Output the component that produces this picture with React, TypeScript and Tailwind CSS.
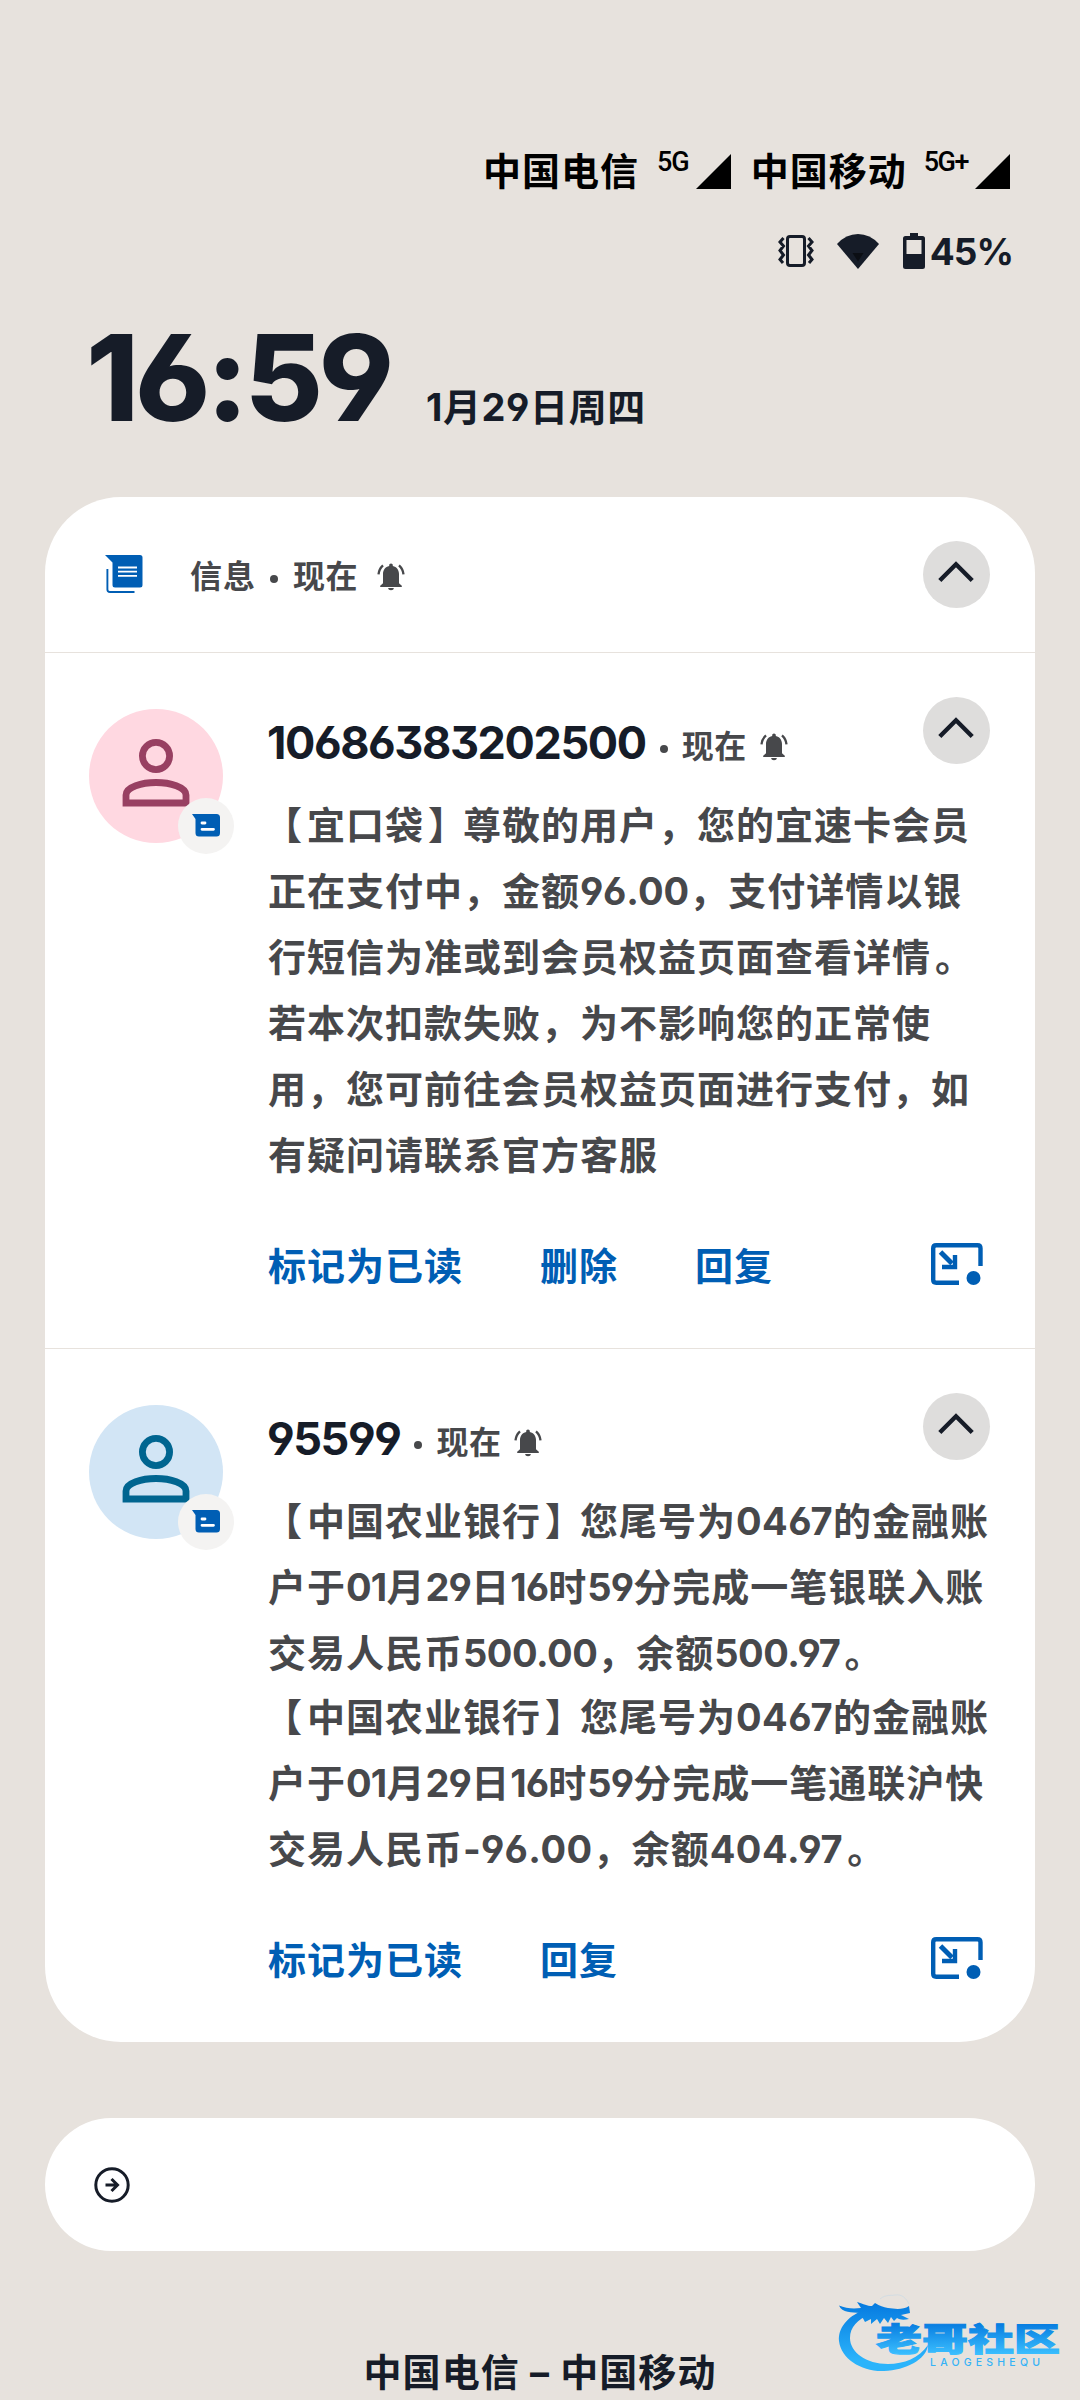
import { ReactNode } from "react";

const Bell = ({ className = "" }: { className?: string }) => (
  <svg viewBox="0 0 28 28" className={`h-[28px] w-[28px] shrink-0 ${className}`} fill="#47484b">
    <path d="M14 .6c1.100 0 1.800.8 1.800 1.700v.7c3.900.9 6.200 4 6.200 8v9.200l2.800 2.600v1.200H3.200v-1.200L6 20.200V11c0-4 2.300-7.100 6.200-8v-.7C12.200 1.400 12.900.6 14 .6z" />
    <path d="M11.200 25h5.600c0 1.300-1.200 2.300-2.800 2.300s-2.800-1-2.800-2.300z" />
    <path d="M6 2.300Q2 6 1.500 11.300M22 2.300Q26 6 26.500 11.300" fill="none" stroke="#47484b" strokeWidth="2.300" />
  </svg>
);

const Signal = () => (
  <svg viewBox="0 0 35 35" className="h-[35px] w-[35px]">
    <path d="M35 0v35H0z" />
  </svg>
);

const Collapse = () => (
  <button className="flex h-[67px] w-[67px] shrink-0 items-center justify-center rounded-full bg-[#dedddc]">
    <svg viewBox="0 0 36 22" className="mb-[5px] mr-px h-[22px] w-[36px]" fill="none" stroke="#161c28" strokeWidth="4.400">
      <path d="M1.800 19.500 18 3.300l16.200 16.200" />
    </svg>
  </button>
);

const Dot = ({ className = "" }: { className?: string }) => (
  <span className={`h-[8px] w-[8px] shrink-0 rounded-full bg-[#47484b] ${className}`} />
);

const Popup = () => (
  <svg viewBox="0 0 52 42" className="h-[42px] w-[52px]" fill="none" stroke="#005eb4" strokeWidth="4.400">
    <path d="M28 39.700H5.200Q2.200 39.700 2.200 36.700V5.200Q2.200 2.200 5.200 2.200H46.500Q49.500 2.200 49.500 5.200V23" />
    <path d="M9.500 9 21 20.500" strokeWidth="5" />
    <path d="M24 12v12H11" />
    <circle cx="42.500" cy="35" r="7" fill="#005eb4" stroke="none" />
  </svg>
);

const Avatar = ({ bg, color }: { bg: string; color: string }) => (
  <div className={`relative h-[134px] w-[134px] shrink-0 rounded-full ${bg}`}>
    <svg viewBox="0 0 134 134" className={`h-full w-full ${color}`} fill="none" stroke="currentColor" strokeWidth="6.800">
      <circle cx="67" cy="47" r="13.600" />
      <path d="M37 94V86C37 78 53 73.500 67 73.500S97 78 97 86V94Z" />
    </svg>
    <div className="absolute left-[89px] top-[89px] flex h-[56px] w-[56px] items-center justify-center rounded-full bg-[#f4f3f2]">
      <svg viewBox="0 0 28 23" className="mb-[1px] h-[23px] w-[28px]">
        <path d="M0 0H24.500Q28 0 28 3.500V19Q28 22.500 24.500 22.500H7Q3.500 22.500 3.500 19V5Z" fill="#005eb4" />
        <path d="M10 9h3M10 15.300H21.500" stroke="#fff" strokeWidth="2.800" strokeLinecap="round" />
      </svg>
    </div>
  </div>
);

// numbers get their own tracking, closing punctuation sits a little further right
const Mixed = ({ text, num }: { text: string; num: string }) => (
  <>
    {text.split(/([-\d.]+|[。】【])/).map((part, i) => {
      if (part === "。" || part === "】") {
        return (
          <span key={i} className="relative left-[4px]">
            {part}
          </span>
        );
      }
      if (part === "【") {
        return (
          <span key={i} className="relative left-[-4px]">
            {part}
          </span>
        );
      }
      return /\d/.test(part) ? (
        <span key={i} className={num}>
          {part}
        </span>
      ) : (
        part
      );
    })}
  </>
);

type Line = { text: string; num?: string; gap?: boolean };

type MessageProps = {
  sender: ReactNode;
  avatar: ReactNode;
  lines: Line[];
  actions: string[];
};

const Message = ({ sender, avatar, lines, actions }: MessageProps) => (
  <section className="flex h-[696px] border-t border-[#e7e2dd] pl-[44px] pr-[45px] pt-[44px]">
    <div className="pt-[12px]">{avatar}</div>
    <div className="ml-[45px] min-w-0 flex-1">
      <div className="flex h-[95px] justify-between">
        <div className="flex h-[90px] items-center">
          <span className="ml-[-1px] text-[45px] leading-none tracking-[-1.4px]">{sender}</span>
          <Dot className="ml-[14px] mt-[14px]" />
          <span className="ml-[14px] mt-[9px] text-[32px] leading-none tracking-[0.5px] text-[#47484b]">现在</span>
          <Bell className="ml-[13px] mt-[9px]" />
        </div>
        <Collapse />
      </div>
      <div className="whitespace-nowrap text-[38px] leading-[66px] tracking-[1px] text-[#47484b]">
        {lines.map((line, i) => (
          <p key={i} className={line.gap ? "mt-[-2px]" : ""}>
            <Mixed text={line.text} num={line.num ?? ""} />
          </p>
        ))}
      </div>
      <div className="mt-[45px] flex h-[66px] items-center text-[38px] tracking-[1px] text-[#005eb4]">
        {actions.map((action) => (
          <button key={action} className="mr-[77px] leading-none">
            {action}
          </button>
        ))}
        <div className="mb-[5px] ml-auto mr-[7px]">
          <Popup />
        </div>
      </div>
    </div>
  </section>
);

const pocketLines: Line[] = [
  { text: "【宜口袋】尊敬的用户，您的宜速卡会员" },
  { text: "正在支付中，金额96.00，支付详情以银", num: "tracking-[0px]" },
  { text: "行短信为准或到会员权益页面查看详情。" },
  { text: "若本次扣款失败，为不影响您的正常使" },
  { text: "用，您可前往会员权益页面进行支付，如" },
  { text: "有疑问请联系官方客服" },
];

const bankLines: Line[] = [
  { text: "【中国农业银行】您尾号为0467的金融账", num: "tracking-[0.4px]" },
  { text: "户于01月29日16时59分完成一笔银联入账", num: "tracking-[-0.8px]" },
  { text: "交易人民币500.00，余额500.97。", num: "tracking-[-0.5px]" },
  { text: "【中国农业银行】您尾号为0467的金融账", num: "tracking-[0.4px]", gap: true },
  { text: "户于01月29日16时59分完成一笔通联沪快", num: "tracking-[-0.8px]" },
  { text: "交易人民币-96.00，余额404.97。", num: "tracking-[0.5px]" },
];

const Logo = () => (
  <svg viewBox="0 0 230 82" className="h-[82px] w-[230px]">
    <defs>
      <linearGradient id="wave" x1="0" y1="0" x2="0" y2="82" gradientUnits="userSpaceOnUse">
        <stop offset="0.150" stopColor="#067be0" />
        <stop offset="0.850" stopColor="#2bb4fb" />
      </linearGradient>
      <linearGradient id="name" x1="0" y1="32" x2="0" y2="64" gradientUnits="userSpaceOnUse">
        <stop offset="0" stopColor="#067be0" />
        <stop offset="1" stopColor="#3cc0ff" />
      </linearGradient>
    </defs>
    <g fill="url(#wave)">
      <path d="M30 19C12 26 4 38 5 50c2 18 23 31 45 30 22-1 42-11 44-26-9 13-24 19-40 19-22 0-38-12-38-26 0-11 8-19 19-23z" />
      <path d="M5 14.500c7 3 14 3.500 22 2.500l-4-6c7 2 10 4 15 4l3-3c5 3 8 4 13 5 7 1 15 2 21-2l1 7-9 2 8 4c-5 1-9 1-12-1l-3 3-3-4-3 6-4-5-4 6-3-5-6 5 0-5-6 3-5-9c-8-1-18 0-21-7.500z" />
    </g>
    <path d="M46 8C52 3 57 5 61 4c7-1 11 3 14 9" fill="none" stroke="#d3dde3" strokeWidth="1" />
    <text x="42" y="59.500" textLength="184" lengthAdjust="spacingAndGlyphs" fontSize="32" fontWeight="900" fill="url(#name)" stroke="url(#name)" strokeWidth="1">
      老哥社区
    </text>
    <text x="96" y="75" textLength="110" fontSize="10.500" fontWeight="500" fill="#35b2f7">
      LAOGESHEQU
    </text>
  </svg>
);

export default function App() {
  return (
    <div className="flex h-[2400px] w-[1080px] flex-col overflow-hidden bg-[#e7e2dd] px-[45px] font-['Inter','Noto_Sans_CJK_SC',sans-serif] font-bold text-[#161c28] [font-feature-settings:'cv03','cv04','cv09']">
      <header className="h-[497px] pt-[148px]">
        <div className="flex h-[46px] items-center justify-end pr-[25px] text-[38px] text-black">
          <span className="mr-[18px] leading-none tracking-[1px]">中国电信</span>
          <span className="mr-[7px] mt-[-18px] font-['Roboto'] text-[27px] font-medium leading-none tracking-[-1px]">5G</span>
          <Signal />
          <span className="ml-[20px] mr-[17px] leading-none tracking-[1px]">中国移动</span>
          <span className="mr-[7px] mt-[-18px] font-['Roboto'] text-[27px] font-medium leading-none tracking-[-1.500px]">5G+</span>
          <Signal />
        </div>
        <div className="mt-[35px] flex h-[44px] items-center justify-end pr-[22px]">
          <svg viewBox="0 0 36 32" className="mr-[23px] h-[32px] w-[36px]" fill="none" stroke="#161c28" strokeWidth="3">
            <rect x="9.500" y="1.500" width="17" height="29" rx="2.500" />
            <path d="M5.500 3 2 7l3.500 4L2 15.500 5.500 20 2 24.500 5 28M30.500 3 34 7l-3.500 4 3.500 4.500-3.500 4.500 3.500 4.500-3 3.500" />
          </svg>
          <svg viewBox="0 0 42 35" className="mr-[24px] h-[35px] w-[42px]">
            <path d="M0 10Q9 0 21 0T42 10L21 35z" fill="#161c28" />
            <path d="M15.500 19h11L21 27.500z" fill="#0b0e14" />
          </svg>
          <svg viewBox="0 0 22 36" className="mr-[5px] h-[36px] w-[22px]">
            <path fillRule="evenodd" d="M7 0h8v3h4.500Q22 3 22 5.500V33.500Q22 36 19.500 36H2.500Q0 36 0 33.500V5.500Q0 3 2.500 3H7zM3.500 7V21h15V7z" fill="#161c28" />
          </svg>
          <span className="text-[37px] leading-none tracking-[-1px]">45%</span>
        </div>
        <div className="flex items-baseline pl-[41px] pt-[32px]">
          <span className="w-[340px] whitespace-nowrap text-[120px] font-extrabold leading-[145px] tracking-[-4px]">16:59</span>
          <span className="whitespace-nowrap text-[38px] leading-none tracking-[0.6px]">1月29日周四</span>
        </div>
      </header>

      <main className="h-[1545px] shrink-0 overflow-hidden rounded-[76px] bg-white">
        <div className="flex h-[155px] items-start pl-[60px] pr-[45px] pt-[44px]">
          <svg viewBox="0 0 38 38" className="mt-[14px] h-[38px] w-[38px]">
            <path d="M0 0H35Q37.500 0 37.500 2.500V30Q37.500 32.500 35 32.500H10Q7.500 32.500 7.500 30V7.500Z" fill="#005eb4" />
            <path d="M13 12.500H32M13 16.700H32M13 20.900H32" stroke="#fff" strokeWidth="1.800" />
            <path d="M2.400 14V34.500Q2.400 37 5 37H29.500" fill="none" stroke="#005eb4" strokeWidth="1.900" />
          </svg>
          <div className="ml-[47px] flex h-[67px] flex-1 items-center pt-[4px] text-[32px] leading-none text-[#47484b]">
            <span className="tracking-[1px]">信息</span>
            <Dot className="ml-[14px] mt-[4px]" />
            <span className="ml-[15px] tracking-[0.5px]">现在</span>
            <Bell className="ml-[19px]" />
          </div>
          <Collapse />
        </div>
        <Message
          sender="10686383202500"
          avatar={<Avatar bg="bg-[#ffd8e1]" color="text-[#984062]" />}
          lines={pocketLines}
          actions={["标记为已读", "删除", "回复"]}
        />
        <Message
          sender="95599"
          avatar={<Avatar bg="bg-[#d2e5f5]" color="text-[#006590]" />}
          lines={bankLines}
          actions={["标记为已读", "回复"]}
        />
      </main>

      <div className="mt-[76px] flex h-[133px] shrink-0 items-center rounded-full bg-white pl-[49px]">
        <svg viewBox="0 0 36 36" className="h-[36px] w-[36px]" fill="none" stroke="#161c28" strokeWidth="3">
          <circle cx="18" cy="18" r="16.200" />
          <path d="M11.500 18H23M17.500 12 23.500 18l-6 6" />
        </svg>
      </div>

      <footer className="relative mt-[98px] text-center text-[38px] leading-[46px] tracking-[1.100px]">
        <span>中国电信 – 中国移动</span>
        <div className="absolute right-[-29px] top-[-58px] tracking-normal">
          <Logo />
        </div>
      </footer>
    </div>
  );
}
